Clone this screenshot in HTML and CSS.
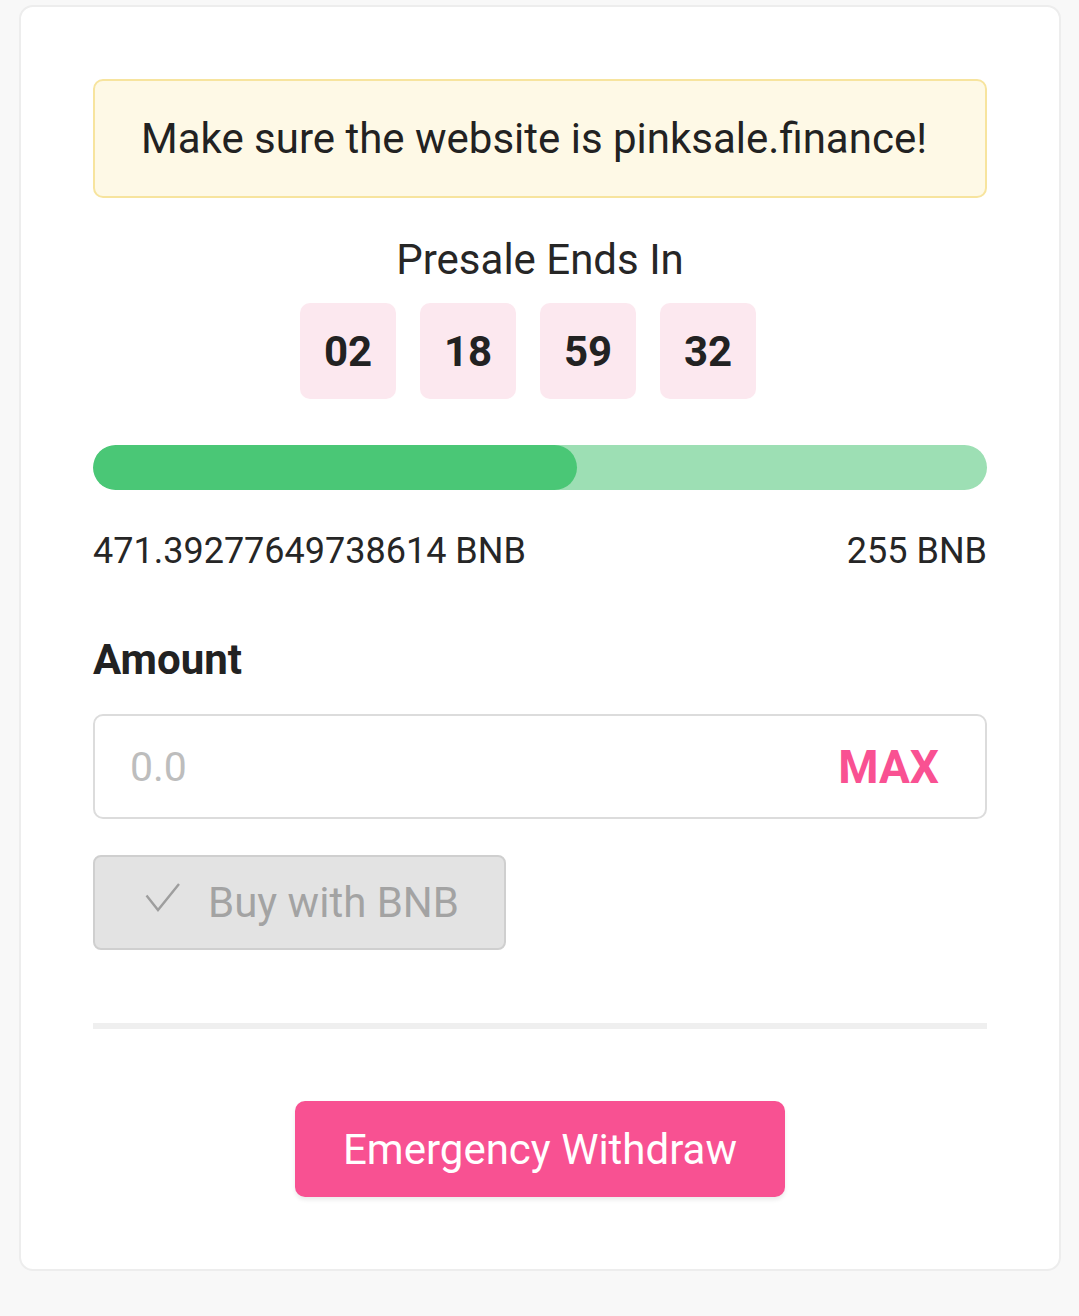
FILE: index.html
```html
<!DOCTYPE html>
<html>
<head>
<meta charset="utf-8">
<link rel="stylesheet" href="styles.css">
</head>
<body>
<div class="card">
  <div class="alert">Make sure the website is pinksale.finance!</div>
  <div class="ends-title">Presale Ends In</div>
  <div class="countdown">
    <div class="cd-box">02</div>
    <div class="cd-box">18</div>
    <div class="cd-box">59</div>
    <div class="cd-box">32</div>
  </div>
  <div class="progress"><div class="progress-fill" style="width:54.1%"></div></div>
  <div class="amounts"><span>471.39277649738614 BNB</span><span>255 BNB</span></div>
  <div class="label">Amount</div>
  <div class="input-box"><span class="placeholder">0.0</span><span class="max">MAX</span></div>
  <div class="buy-row">
    <div class="buy-btn">
      <svg class="check" width="35" height="29" viewBox="0 0 35 29"><path d="M1.5 12.5 L13 27 L34 1" fill="none" stroke="#9e9e9e" stroke-width="2.4"/></svg>
      <span>Buy with BNB</span>
    </div>
  </div>
  <div class="divider"></div>
  <div class="ew-row"><div class="ew-btn">Emergency Withdraw</div></div>
</div>
</body>
</html>
```
FILE: styles.css
```css
html, body { margin: 0; padding: 0; }
body {
  background: #f8f8f8;
  padding: 5px 18px 0 19px;
  font-family: Roboto, "Noto Sans", sans-serif;
  color: #222;
}
.card {
  background: #fff;
  border: 2px solid #ededed;
  border-radius: 14px;
  padding: 72px;
  height: 1266px;
  box-sizing: border-box;
}
.alert {
  background: #fef9e6;
  border: 2px solid #f7e49e;
  border-radius: 10px;
  height: 119px;
  box-sizing: border-box;
  display: flex;
  align-items: center;
  justify-content: center;
  padding-right: 12px;
  font-size: 42px;
  color: #222;
}
.ends-title {
  text-align: center;
  font-size: 42px;
  margin-top: 38px;
  line-height: 48px;
  color: #262626;
}
.countdown {
  display: flex;
  justify-content: center;
  gap: 24px;
  margin-top: 19px;
  padding-right: 24px;
}
.cd-box {
  width: 96px;
  height: 96px;
  border-radius: 10px;
  background: #fce8ef;
  display: flex;
  align-items: center;
  justify-content: center;
  font-size: 42px;
  font-weight: 700;
  color: #222;
}
.progress {
  margin-top: 46px;
  height: 45px;
  border-radius: 23px;
  background: #9ddfb4;
  overflow: hidden;
}
.progress-fill {
  height: 100%;
  background: #4ac776;
  border-radius: 23px;
}
.amounts {
  display: flex;
  justify-content: space-between;
  margin-top: 40px;
  font-size: 36px;
  line-height: 42px;
  color: #262626;
}
.label {
  margin-top: 64px;
  font-size: 42px;
  font-weight: 700;
  line-height: 48px;
  color: #222;
}
.input-box {
  margin-top: 30px;
  height: 105px;
  box-sizing: border-box;
  border: 2px solid #dcdcdc;
  border-radius: 10px;
  display: flex;
  align-items: center;
  justify-content: space-between;
  padding: 0 46px 0 35px;
}
.placeholder {
  font-size: 41px;
  color: #bdbdbd;
}
.max {
  font-size: 46px;
  font-weight: 700;
  color: #f95192;
}
.buy-row {
  margin-top: 36px;
  display: flex;
}
.buy-btn {
  width: 413px;
  height: 95px;
  box-sizing: border-box;
  background: #e3e3e3;
  border: 2px solid #cfcfcf;
  border-radius: 8px;
  display: flex;
  align-items: center;
  padding-left: 50px;
  gap: 28px;
  font-size: 42px;
  color: #a3a3a3;
}
.check { margin-top: -10px; }
.divider {
  margin-top: 73px;
  height: 6px;
  background: #efefef;
}
.ew-row {
  margin-top: 72px;
  display: flex;
  justify-content: center;
}
.ew-btn {
  width: 490px;
  height: 96px;
  border-radius: 10px;
  background: #f85192;
  color: #fff;
  font-size: 42px;
  display: flex;
  align-items: center;
  justify-content: center;
  box-shadow: 0 3px 4px rgba(0,0,0,0.08);
}
```
